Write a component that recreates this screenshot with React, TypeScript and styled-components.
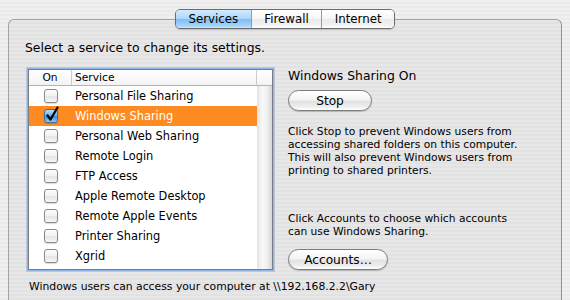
import React from 'react';
import styled, { createGlobalStyle } from 'styled-components';

const GlobalStyle = createGlobalStyle`
  html, body {
    margin: 0;
    padding: 0;
  }
  body {
    width: 570px;
    height: 300px;
    overflow: hidden;
    font-family: "DejaVu Sans", "Noto Sans", sans-serif;
    color: #000;
    background: repeating-linear-gradient(to bottom, #efefef 0 2px, #eaeaea 2px 4px);
  }
`;

const Window = styled.div`
  height: 300px;
  box-sizing: border-box;
  padding: 9px 8px 0;
  overflow: hidden;
`;

const TabBar = styled.div`
  position: relative;
  z-index: 1;
  display: flex;
  justify-content: center;
`;

const Segmented = styled.div`
  display: flex;
  height: 20px;
  box-sizing: border-box;
  border: 1px solid #6c6c6c;
  border-radius: 5px;
  overflow: hidden;
  box-shadow: 0 1px 1px rgba(0, 0, 0, 0.18);
`;

const Segment = styled.div<{ $active?: boolean }>`
  padding: 0 12.5px;
  font-size: 11.8px;
  line-height: 18px;
  border-left: 1px solid #9a9a9a;
  background: ${(p) =>
    p.$active
      ? 'linear-gradient(#d3ebfd 0%, #acd6fa 48%, #7fbdf3 52%, #9fd3fb 85%, #c6e7fe 100%)'
      : 'linear-gradient(#ffffff 0%, #f6f6f6 48%, #ebebeb 52%, #f2f2f2 85%, #ffffff 100%)'};

  &:first-child {
    border-left: none;
  }
`;

const Panel = styled.div`
  margin-top: -10px;
  height: 290px;
  box-sizing: border-box;
  padding: 20px 0 0 16px;
  border: 1px solid #a3a3a3;
  border-right-color: #8f8f8f;
  border-bottom: none;
  border-radius: 6px 6px 0 0;
  background: repeating-linear-gradient(to bottom, #e7e7e7 0 2px, #e2e2e2 2px 4px);
`;

const Title = styled.div`
  font-size: 12.4px;
  line-height: 15px;
`;

const Columns = styled.div`
  display: flex;
  margin-top: 13px;
`;

const ListBox = styled.div`
  display: flex;
  flex-direction: column;
  width: 245px;
  height: 201px;
  box-sizing: border-box;
  margin: 1px 0 0 3px;
  border: 1px solid #7d7d7d;
  background: #fff;
  box-shadow: 0 0 0 1px #8db4e4, 0 0 0 2px rgba(141, 180, 228, 0.55);
`;

const HeaderRow = styled.div`
  display: grid;
  grid-template-columns: 43px 185px 15px;
  height: 16px;
  box-sizing: border-box;
  border-bottom: 1px solid #b4b4b4;
  background: linear-gradient(#ffffff, #f3f3f3);
  font-size: 10.7px;
  line-height: 15px;
`;

const HeaderCell = styled.div<{ $center?: boolean }>`
  border-right: 1px solid #cbcbcb;
  padding-left: ${(p) => (p.$center ? '0' : '3px')};
  text-align: ${(p) => (p.$center ? 'center' : 'left')};

  &:last-child {
    border-right: none;
  }
`;

const Body = styled.div`
  display: flex;
  flex: 1;
`;

const Rows = styled.div`
  flex: 1;
`;

const Track = styled.div`
  width: 15px;
  background: linear-gradient(to right, #e2e2e2 0%, #f9f9f9 35%, #eeeeee 70%, #d4d4d4 100%);
`;

const Row = styled.div<{ $selected?: boolean }>`
  display: grid;
  grid-template-columns: 43px 1fr;
  align-items: center;
  height: 20px;
  font-size: 11.4px;
  background: ${(p) => (p.$selected ? '#fd8b22' : 'transparent')};
  color: ${(p) => (p.$selected ? '#fff' : '#000')};
`;

const CheckCell = styled.div`
  display: flex;
  justify-content: center;
`;

const Box = styled.div<{ $checked?: boolean }>`
  position: relative;
  width: 14px;
  height: 14px;
  box-sizing: border-box;
  border: 1px solid ${(p) => (p.$checked ? '#3f6f9f' : '#8a8a8a')};
  border-radius: 3px;
  background: ${(p) =>
    p.$checked
      ? 'linear-gradient(#b9dcfb 0%, #6eb1ee 45%, #3d8fe0 55%, #8ccaf9 100%)'
      : 'linear-gradient(#fdfdfd 0%, #f1f1f1 50%, #e4e4e4 55%, #f8f8f8 100%)'};
  box-shadow: 0 1px 1px rgba(0, 0, 0, 0.15);
`;

const Mark = styled.svg`
  position: absolute;
  left: 1px;
  top: -3px;
  overflow: visible;
`;

const Label = styled.div`
  padding-left: 3px;
  white-space: nowrap;
`;

const Side = styled.div`
  display: flex;
  flex-direction: column;
  align-items: flex-start;
  margin-left: 15px;
`;

const Heading = styled.div`
  font-size: 12.4px;
  line-height: 15px;
`;

const PillButton = styled.button<{ $width: number; $gap: number }>`
  width: ${(p) => p.$width}px;
  height: 21px;
  margin-top: ${(p) => p.$gap}px;
  padding: 0;
  border: 1px solid #7c7c7c;
  border-radius: 11px;
  font-family: inherit;
  font-size: 12.2px;
  color: #000;
  background: linear-gradient(#ffffff 0%, #f4f4f4 45%, #e3e3e3 55%, #ececec 80%, #ffffff 100%);
  box-shadow: 0 1px 1px rgba(0, 0, 0, 0.2);
`;

const Note = styled.div<{ $gap: number }>`
  margin-top: ${(p) => p.$gap}px;
  font-size: 10.7px;
  line-height: 13px;
  white-space: nowrap;
`;

const Footer = styled.div`
  margin-top: 10px;
  padding-left: 4px;
  font-size: 10.8px;
  line-height: 14px;
`;

const services = [
  'Personal File Sharing',
  'Windows Sharing',
  'Personal Web Sharing',
  'Remote Login',
  'FTP Access',
  'Apple Remote Desktop',
  'Remote Apple Events',
  'Printer Sharing',
  'Xgrid',
];

const Checkbox = ({ checked }: { checked?: boolean }) => (
  <Box $checked={checked}>
    {checked && (
      <Mark width="12" height="14" viewBox="0 0 12 14">
        <path d="M1.5 8.5 L4.5 12.5 L11.5 0.5" fill="none" stroke="#000" strokeWidth="2.2" strokeLinecap="round" strokeLinejoin="round" />
      </Mark>
    )}
  </Box>
);

export default function App() {
  return (
    <>
      <GlobalStyle />
      <Window>
        <TabBar>
          <Segmented>
            <Segment $active>Services</Segment>
            <Segment>Firewall</Segment>
            <Segment>Internet</Segment>
          </Segmented>
        </TabBar>
        <Panel>
          <Title>Select a service to change its settings.</Title>
          <Columns>
            <ListBox>
              <HeaderRow>
                <HeaderCell $center>On</HeaderCell>
                <HeaderCell>Service</HeaderCell>
                <HeaderCell />
              </HeaderRow>
              <Body>
                <Rows>
                  {services.map((name, i) => (
                    <Row key={name} $selected={i === 1}>
                      <CheckCell>
                        <Checkbox checked={i === 1} />
                      </CheckCell>
                      <Label>{name}</Label>
                    </Row>
                  ))}
                </Rows>
                <Track />
              </Body>
            </ListBox>
            <Side>
              <Heading>Windows Sharing On</Heading>
              <PillButton $width={84} $gap={7}>Stop</PillButton>
              <Note $gap={14}>
                Click Stop to prevent Windows users from
                <br />
                accessing shared folders on this computer.
                <br />
                This will also prevent Windows users from
                <br />
                printing to shared printers.
              </Note>
              <Note $gap={35}>
                Click Accounts to choose which accounts
                <br />
                can use Windows Sharing.
              </Note>
              <PillButton $width={100} $gap={11}>Accounts…</PillButton>
            </Side>
          </Columns>
          <Footer>Windows users can access your computer at \\192.168.2.2\Gary</Footer>
        </Panel>
      </Window>
    </>
  );
}
